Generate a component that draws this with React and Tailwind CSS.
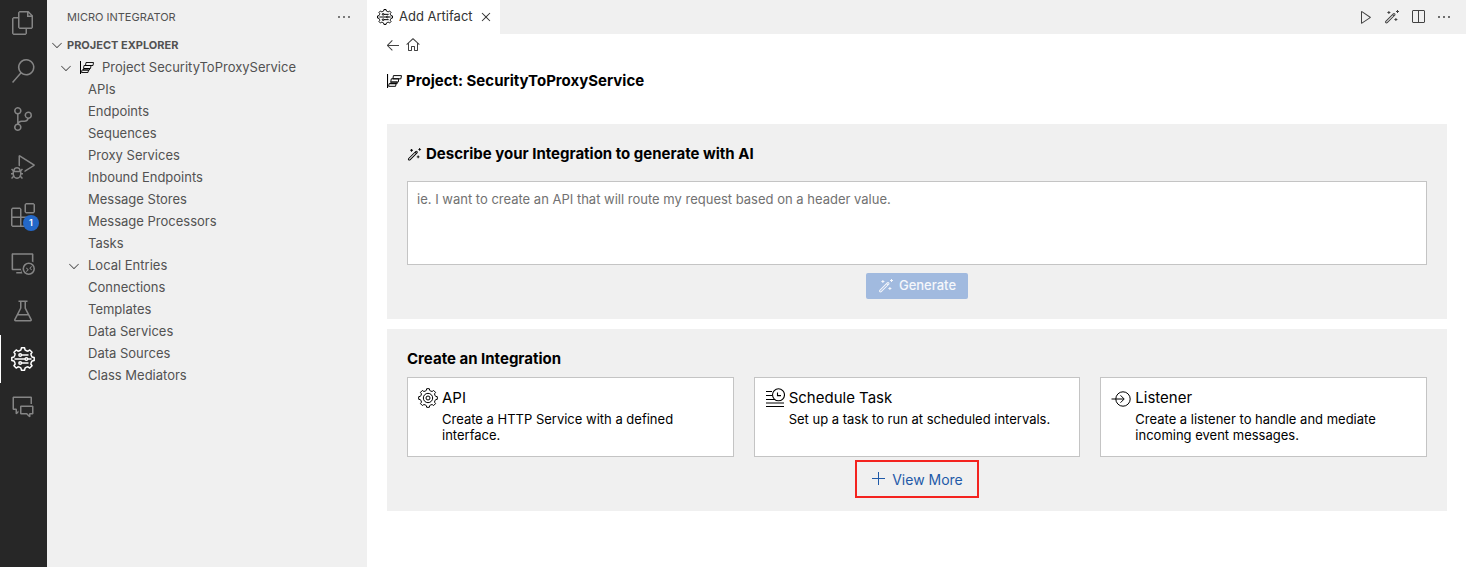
import React from "react";
import {
  VscFiles,
  VscSearch,
  VscSourceControl,
  VscDebugAlt,
  VscExtensions,
  VscRemoteExplorer,
  VscBeaker,
  VscCommentDiscussion,
  VscEllipsis,
  VscChevronDown,
  VscArrowLeft,
  VscHome,
  VscPlay,
  VscWand,
  VscSplitHorizontal,
  VscClose,
  VscAdd,
} from "react-icons/vsc";

// Outline of a cog with evenly spaced, slightly tapered teeth.
function cogPath(cx, cy, outer, inner, teeth) {
  const step = (Math.PI * 2) / teeth;
  const at = (r, a) => `${(cx + r * Math.sin(a)).toFixed(2)} ${(cy - r * Math.cos(a)).toFixed(2)}`;
  let d = "";
  for (let i = 0; i < teeth; i++) {
    const a = i * step;
    d += `${i ? "L" : "M"}${at(outer, a - step * 0.18)}L${at(outer, a + step * 0.18)}L${at(inner, a + step * 0.28)}`;
    d += `Q${at(inner - 0.6, a + step * 0.5)} ${at(inner, a + step * 0.72)}`;
  }
  return d + "Z";
}

const COG = cogPath(12, 12, 11.3, 9.3, 8);

function IntegratorIcon({ className }) {
  return (
    <svg viewBox="0 0 24 24" className={className} fill="none" stroke="currentColor" strokeWidth="1.5" strokeLinejoin="round" aria-hidden="true">
      <path d={COG} />
      <path d="M10.4 8H17.5M3.5 12H14M10.4 16H17.5M16.8 12h3.7" />
      <circle cx="9.2" cy="8" r="1.3" />
      <circle cx="15.4" cy="12" r="1.3" />
      <circle cx="9.2" cy="16" r="1.3" />
    </svg>
  );
}

function ApiIcon({ className }) {
  return (
    <svg viewBox="0 0 24 24" className={className} fill="none" stroke="currentColor" strokeWidth="1.2" strokeLinejoin="round" aria-hidden="true">
      <path d={COG} />
      <circle cx="12" cy="12" r="5.6" />
      <circle cx="12" cy="12" r="2.4" />
    </svg>
  );
}

function ProjectIcon({ className }) {
  return (
    <svg viewBox="0 0 14 14" className={className} fill="none" stroke="currentColor" aria-hidden="true">
      <path d="M0.5 0V13" />
      <path d="M6 1.5H13.5L13 4.5H5.5ZM4 4.5H11L10.5 7.5H3.5ZM4 7.5H9.5V9H3ZM2 9H8.5L8 11.5H1.5Z" strokeWidth="0.9" />
    </svg>
  );
}

function ScheduleIcon({ className }) {
  return (
    <svg viewBox="0 0 20 20" className={className} fill="none" stroke="currentColor" aria-hidden="true">
      <path d="M1 3.5H7M1 7.5H7M1 11.5H10M1 15H19M1 18.5H19" strokeWidth="1.2" />
      <circle cx="13.5" cy="6.8" r="6" strokeWidth="1.1" />
      <path d="M12.5 4.5V7.6H16" strokeWidth="1.1" />
    </svg>
  );
}

function ListenerIcon({ className }) {
  return (
    <svg viewBox="0 0 20 20" className={className} fill="none" stroke="currentColor" aria-hidden="true">
      <circle cx="12" cy="11" r="7.2" />
      <path d="M0.5 11H12.5M9.5 7.3L13.2 11L9.5 14.7" />
    </svg>
  );
}

const activities = [
  { label: "Explorer", Icon: VscFiles },
  { label: "Search", Icon: VscSearch },
  { label: "Source Control", Icon: VscSourceControl },
  { label: "Run and Debug", Icon: VscDebugAlt },
  { label: "Extensions", Icon: VscExtensions, badge: "1" },
  { label: "Remote Explorer", Icon: VscRemoteExplorer },
  { label: "Testing", Icon: VscBeaker },
  { label: "Micro Integrator", Icon: IntegratorIcon, active: true },
  { label: "Comments", Icon: VscCommentDiscussion },
];

const treeItems = [
  "APIs",
  "Endpoints",
  "Sequences",
  "Proxy Services",
  "Inbound Endpoints",
  "Message Stores",
  "Message Processors",
  "Tasks",
  "Local Entries",
  "Connections",
  "Templates",
  "Data Services",
  "Data Sources",
  "Class Mediators",
];

const integrations = [
  { title: "API", text: "Create a HTTP Service with a defined interface.", Icon: ApiIcon },
  { title: "Schedule Task", text: "Set up a task to run at scheduled intervals.", Icon: ScheduleIcon },
  { title: "Listener", text: "Create a listener to handle and mediate incoming event messages.", Icon: ListenerIcon },
];

function ActivityBar() {
  return (
    <nav aria-label="Activity bar" className="w-[47px] shrink-0 bg-[#272727]">
      <ul className="-mt-px">
        {activities.map(({ label, Icon, badge, active }) => (
          <li key={label}>
            <button
              type="button"
              aria-label={label}
              className={
                active
                  ? "relative flex h-12 w-full items-center justify-center border-l border-white pr-[2px] text-white"
                  : "relative flex h-12 w-full items-center justify-center pr-px text-[#858585]"
              }
            >
              <Icon className="size-6" />
              {badge && (
                <span className="absolute right-2 bottom-2 flex size-4 items-center justify-center rounded-full bg-[#2468c8] text-[9px] font-semibold text-white">
                  {badge}
                </span>
              )}
            </button>
          </li>
        ))}
      </ul>
    </nav>
  );
}

function Sidebar() {
  return (
    <aside className="w-80 shrink-0 bg-[#f0f0f0] text-[13px] text-[#525252]">
      <div className="flex h-[34px] items-center justify-between pr-[15px] pl-5">
        <h2 className="text-[11px]">MICRO INTEGRATOR</h2>
        <button type="button" aria-label="More actions">
          <VscEllipsis className="size-4" />
        </button>
      </div>
      <button type="button" className="flex h-[22px] w-full items-center gap-[2px] pl-[2px] text-[11px] font-bold">
        <VscChevronDown className="size-4" />
        PROJECT EXPLORER
      </button>
      <div className="pt-px">
        <button type="button" className="flex h-[22px] w-full items-center pl-[11px]">
          <VscChevronDown className="size-4" />
          <ProjectIcon className="ml-[6px] size-[14px] text-black" />
          <span className="ml-2">Project SecurityToProxyService</span>
        </button>
        <ul>
          {treeItems.map((item) => (
            <li key={item}>
              <button type="button" className="flex h-[22px] w-full items-center gap-[6px] pl-[19px]">
                <span className="size-4">{item === "Local Entries" && <VscChevronDown className="size-4" />}</span>
                {item}
              </button>
            </li>
          ))}
        </ul>
      </div>
    </aside>
  );
}

function TabBar() {
  return (
    <div className="flex h-[34px] items-center justify-between bg-[#f0f0f0] pr-[14px]">
      <div className="flex h-full items-center bg-white pr-[6px] pl-[10px] text-[13px] text-[#333333]">
        <IntegratorIcon className="size-4 text-black" />
        <span className="ml-[6px]">Add Artifact</span>
        <button type="button" aria-label="Close tab" className="ml-[5px]">
          <VscClose className="size-4" />
        </button>
      </div>
      <div className="flex items-center gap-[10px] text-[#424242]">
        <button type="button" aria-label="Run">
          <VscPlay className="size-4" />
        </button>
        <button type="button" aria-label="Generate with AI">
          <VscWand className="size-4" />
        </button>
        <button type="button" aria-label="Split editor">
          <VscSplitHorizontal className="size-4" />
        </button>
        <button type="button" aria-label="More editor actions">
          <VscEllipsis className="size-4" />
        </button>
      </div>
    </div>
  );
}

export default function App() {
  return (
    <div className="flex min-h-screen bg-white font-['Inter',sans-serif] text-black">
      <ActivityBar />
      <Sidebar />
      <main className="min-w-0 flex-1">
        <TabBar />
        <div className="flex h-[22px] items-center gap-1 pl-[18px] text-[#424242]">
          <button type="button" aria-label="Back">
            <VscArrowLeft className="size-4" />
          </button>
          <button type="button" aria-label="Home">
            <VscHome className="size-4" />
          </button>
        </div>
        <div className="flex flex-col pt-[15px] pr-[19px] pl-5">
          <h1 className="flex items-center gap-1 text-[15px] leading-5 font-bold">
            <ProjectIcon className="size-[15px]" />
            Project: SecurityToProxyService
          </h1>

          <section className="mt-[33px] flex flex-col items-center bg-[#f0f0f0] p-5">
            <label htmlFor="prompt" className="flex items-center gap-1 self-start text-[15px] leading-5 font-bold">
              <VscWand className="size-[15px]" />
              Describe your Integration to generate with AI
            </label>
            <textarea
              id="prompt"
              placeholder="ie. I want to create an API that will route my request based on a header value."
              className="mt-[17px] h-[84px] w-full resize-none border border-[#c4c4c4] bg-white px-[9px] py-[7px] text-[13px] leading-5 placeholder:text-[#717171]"
            />
            <button
              type="button"
              disabled
              className="mt-2 flex h-[26px] items-center gap-[5px] rounded-xs bg-[#a1badf] px-3 text-[13px] font-medium text-[#f5f7fb]"
            >
              <VscWand className="size-4" />
              Generate
            </button>
          </section>

          <section className="mt-[10px] flex flex-col items-center bg-[#f0f0f0] px-5 pt-5 pb-[13px]">
            <h2 className="self-start text-[15px] leading-5 font-bold">Create an Integration</h2>
            <div className="mt-2 grid w-full grid-cols-3 gap-5">
              {integrations.map(({ title, text, Icon }) => (
                <button
                  key={title}
                  type="button"
                  className="flex min-h-20 items-start gap-1 border border-[#c4c4c4] bg-white px-[10px] py-[10px] text-left"
                >
                  <Icon className="size-5 shrink-0" />
                  <span className="flex flex-col">
                    <span className="text-[15px] leading-5">{title}</span>
                    <span className="mt-[3px] text-[13px] leading-4">{text}</span>
                  </span>
                </button>
              ))}
            </div>
            <button
              type="button"
              className="mt-[3px] flex h-[38px] items-center gap-[5px] border-2 border-[#f4231f] px-[14px] text-[14px] text-[#1f5aa8]"
            >
              <VscAdd className="size-4" />
              View More
            </button>
          </section>
        </div>
      </main>
    </div>
  );
}
